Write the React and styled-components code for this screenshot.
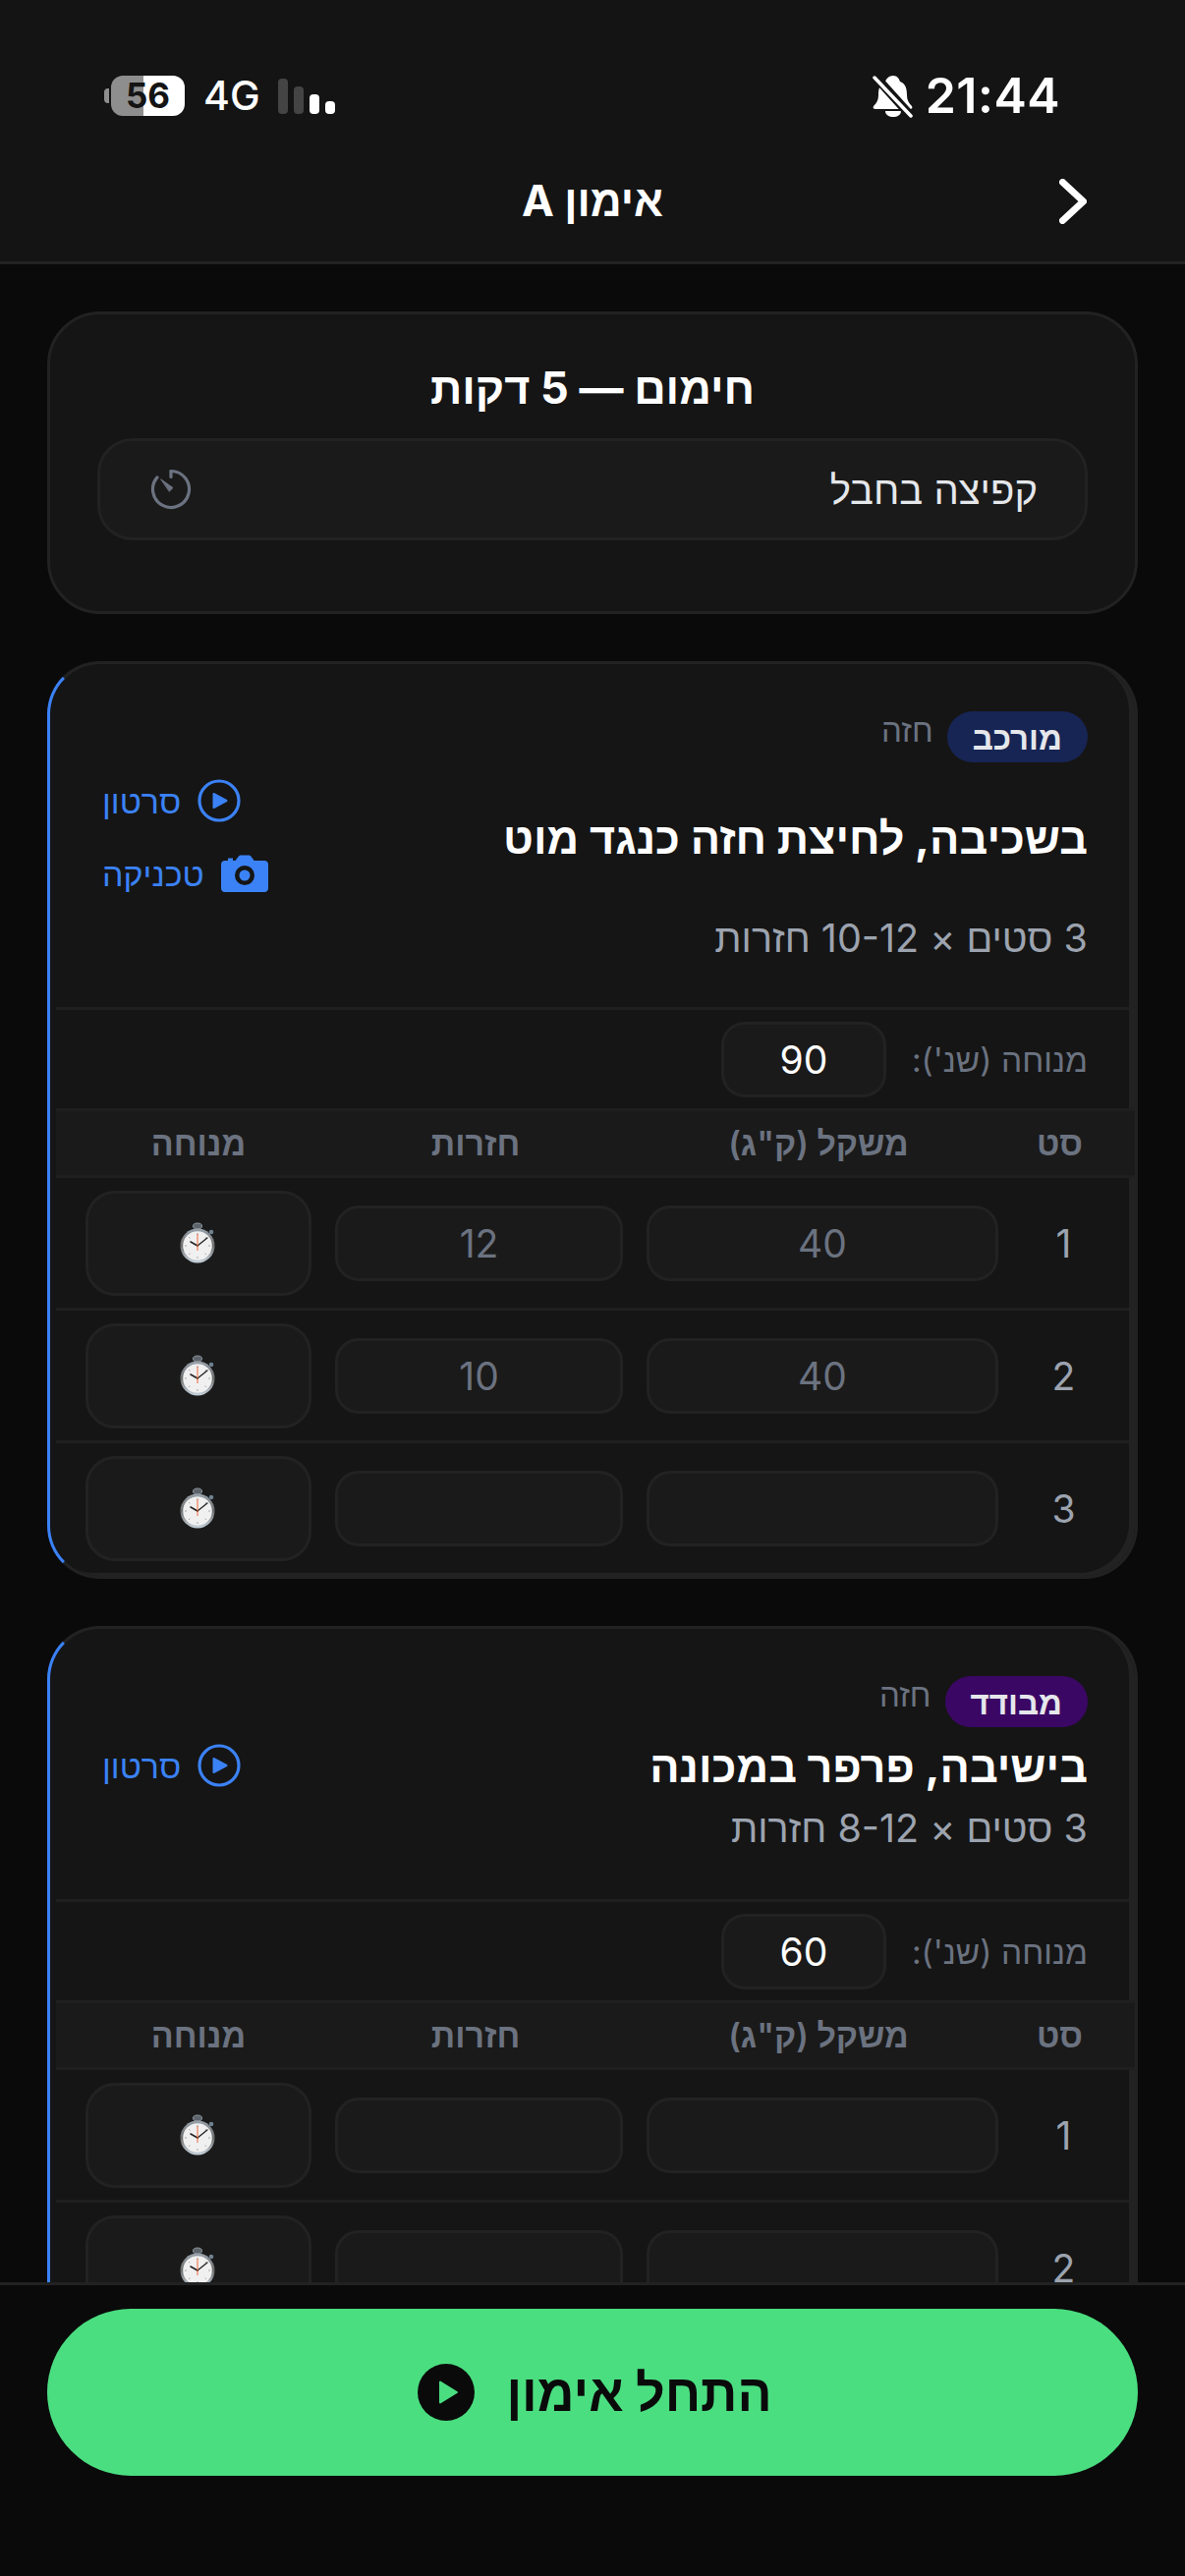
import React from 'react';
import styled, { createGlobalStyle } from 'styled-components';

const GlobalStyle = createGlobalStyle`
  html, body {
    margin: 0;
    padding: 0;
    background: #0a0a0a;
  }
  * {
    box-sizing: border-box;
  }
`;

const Screen = styled.div`
  width: 1206px;
  height: 2622px;
  position: relative;
  overflow: hidden;
  display: flex;
  flex-direction: column;
  background: #0a0a0a;
  font-family: Inter, "Liberation Sans", sans-serif;
  color: #fff;
`;

const Header = styled.header`
  flex: none;
  height: 269px;
  background: #141414;
  border-bottom: 3px solid #222;
`;

const StatusBar = styled.div`
  height: 155px;
  padding: 76px 127px 0 106px;
  display: flex;
  justify-content: space-between;
  align-items: flex-start;
`;

const StatusGroup = styled.div`
  display: flex;
  align-items: center;
  gap: ${(p) => p.$gap}px;
  height: 43px;
`;

const Battery = styled.div`
  position: relative;
  width: 75px;
  height: 41px;
  margin-left: 7px;
  border-radius: 12px;
  background: linear-gradient(90deg, #8e8e8e 0 44%, #fff 44% 100%);
  color: #141414;
  font-size: 35px;
  font-weight: 700;
  line-height: 41px;
  text-align: center;

  &::before {
    content: '';
    position: absolute;
    left: -7px;
    top: 13px;
    width: 5px;
    height: 15px;
    border-radius: 4px 0 0 4px;
    background: #8e8e8e;
  }
`;

const NetworkLabel = styled.span`
  font-size: 41px;
  font-weight: 500;
  line-height: 43px;
  margin-left: 19px;
`;

const Signal = styled.div`
  display: flex;
  align-items: flex-end;
  gap: 6px;
  height: 36px;
  margin-left: 18px;
`;

const SignalBar = styled.i`
  display: block;
  width: 10px;
  height: ${(p) => p.$h}px;
  border-radius: 4px;
  background: ${(p) => (p.$on ? '#fff' : '#444')};
`;

const Clock = styled.span`
  font-size: 50px;
  font-weight: 600;
  line-height: 43px;
  letter-spacing: 0.5px;
`;

const NavBar = styled.div`
  position: relative;
  height: 111px;
  display: flex;
  align-items: center;
  justify-content: center;
  padding-bottom: 14px;
`;

const NavTitle = styled.h1`
  margin: 0;
  font-size: 44px;
  font-weight: 700;
  direction: rtl;
`;

const BackButton = styled.span`
  position: absolute;
  left: 1078px;
  top: 27px;
  display: flex;
`;

const Main = styled.main`
  flex: 1;
  min-height: 0;
  overflow: hidden;
  padding: 48px 48px 0;
  display: flex;
  flex-direction: column;
  gap: 48px;
  direction: rtl;
`;

const WarmupCard = styled.section`
  flex: none;
  height: 308px;
  padding: 45px 48px 0;
  background: #151515;
  border: 3px solid #222;
  border-radius: 54px;
`;

const WarmupTitle = styled.h2`
  margin: 0 0 21px;
  font-size: 45px;
  line-height: 60px;
  font-weight: 700;
  text-align: center;
`;

const WarmupRow = styled.div`
  height: 104px;
  padding: 0 48px 0 51px;
  display: flex;
  justify-content: space-between;
  align-items: center;
  background: #1a1a1a;
  border: 3px solid #222;
  border-radius: 36px;
  font-size: 40px;
  color: #e5e7eb;
`;

const ExerciseCard = styled.section`
  flex: none;
  padding-bottom: 3px;
  background: #151515;
  border: 3px solid #222;
  border-left-color: #3b82f6;
  border-radius: 54px;
  box-shadow: inset -6px -3px 0 #222;
  overflow: hidden;
`;

const ExerciseHead = styled.div`
  height: ${(p) => p.$h}px;
  padding: 48px 48px 0 53px;
  display: flex;
  justify-content: space-between;
`;

const ExerciseInfo = styled.div`
  display: flex;
  flex-direction: column;
`;

const TagLine = styled.div`
  display: flex;
  align-items: flex-start;
  gap: 14px;
  height: 52px;
`;

const Badge = styled.span`
  height: 52px;
  padding: 0 26px;
  border-radius: 26px;
  background: ${(p) => p.$bg};
  color: #e5e7eb;
  font-size: 33px;
  font-weight: 600;
  line-height: 54px;
`;

const Muscle = styled.span`
  font-size: 33px;
  line-height: 38px;
  color: #6b7280;
`;

const ExerciseName = styled.h3`
  margin: ${(p) => p.$top}px 0 0;
  font-size: 45px;
  line-height: 60px;
  font-weight: 700;
`;

const ExerciseScheme = styled.p`
  margin: ${(p) => p.$top}px 0 0;
  font-size: 39.5px;
  line-height: 54px;
  color: #9ca3af;
`;

const Links = styled.div`
  display: flex;
  flex-direction: column;
  align-items: flex-end;
  gap: 30px;
  padding-top: ${(p) => p.$top}px;
`;

const LinkItem = styled.a`
  display: flex;
  align-items: center;
  gap: 17px;
  height: 44px;
  font-size: 34px;
  color: #3b82f6;
`;

const RestRow = styled.div`
  height: 103px;
  margin: 0 6px;
  padding: 12px 42px 0 0;
  display: flex;
  align-items: flex-start;
  gap: 26px;
  border-top: 3px solid #1f1f1f;
`;

const RestLabel = styled.label`
  font-size: 33.5px;
  line-height: 78px;
  color: #6b7280;
`;

const RestInput = styled.div`
  width: 168px;
  height: 77px;
  background: #1a1a1a;
  border: 3px solid #222;
  border-radius: 24px;
  font-size: 39px;
  line-height: 71px;
  text-align: center;
  color: #fff;
`;

const columns = '109px 358px 293px 230px';

const TableHead = styled.div`
  height: 71px;
  margin-left: 6px;
  padding: 0 6px 0 30px;
  display: grid;
  grid-template-columns: ${columns};
  column-gap: 24px;
  align-items: center;
  background: #1a1a1a;
  border-top: 3px solid #1f1f1f;
  border-bottom: 3px solid #1f1f1f;
`;

const HeadCell = styled.span`
  padding-right: ${(p) => p.$nudge || 0}px;
  font-size: 34px;
  font-weight: 600;
  text-align: center;
  color: #6b7280;
`;

const SetHead = styled(HeadCell)`
  margin-left: -24px;
`;

const Row = styled.div`
  height: ${(p) => (p.$last ? 132 : 135)}px;
  margin: 0 6px;
  padding-left: 30px;
  display: grid;
  grid-template-columns: ${columns};
  column-gap: 24px;
  align-items: center;
  border-bottom: ${(p) => (p.$last ? 'none' : '3px solid #1f1f1f')};
`;

const SetNumber = styled.span`
  margin-left: -24px;
  font-size: 39px;
  text-align: center;
  color: #9ca3af;
`;

const ValueBox = styled.div`
  height: 77px;
  background: #1a1a1a;
  border: 3px solid #222;
  border-radius: 24px;
  font-size: 39px;
  line-height: 71px;
  text-align: center;
  color: #6b7280;
`;

const TimerButton = styled.div`
  height: 107px;
  display: flex;
  align-items: center;
  justify-content: center;
  background: #1a1a1a;
  border: 3px solid #222;
  border-radius: 30px;
`;

const Footer = styled.footer`
  position: absolute;
  left: 0;
  right: 0;
  bottom: 0;
  height: 299px;
  padding: 24px 48px 0;
  background: #0a0a0a;
  border-top: 3px solid #222;
`;

const StartButton = styled.button`
  width: 100%;
  height: 170px;
  padding: 0 0 0 5px;
  display: flex;
  align-items: center;
  justify-content: center;
  gap: 32px;
  border: none;
  border-radius: 85px;
  background: #4ade80;
  color: #0a0a0a;
  font-family: inherit;
  font-size: 52px;
  font-weight: 700;
  direction: rtl;
`;

const BellOff = () => (
  <svg width="42" height="44" viewBox="0 0 42 44">
    <path d="M21 1c4 0 6 3 7 6 6 2 7 8 7 14 0 5 2 8 5 11 1 2 0 3-2 3H3c-2 0-3-1-2-3 3-3 5-6 5-11 0-6 1-12 7-14 1-3 4-6 8-6z" fill="#fff" />
    <path d="M13 37h16c0 4-4 6-8 6s-8-2-8-6z" fill="#fff" />
    <path d="M3 2l36 40" stroke="#141414" strokeWidth="9" />
    <path d="M2 3l37 39" stroke="#fff" strokeWidth="3.5" strokeLinecap="round" />
  </svg>
);

const Chevron = () => (
  <svg width="28" height="46" viewBox="0 0 28 46" fill="none">
    <path d="M3.500 3.500L24.500 23L3.500 42.500" stroke="#fff" strokeWidth="7" strokeLinecap="round" strokeLinejoin="round" />
  </svg>
);

const WarmupTimer = () => (
  <svg width="42" height="42" viewBox="0 0 42 42" fill="none" stroke="#6b7280" strokeWidth="3.2" strokeLinecap="round">
    <path d="M21 2.500a18.500 18.500 0 1 1-14 6.400" />
    <path d="M21 2.500v6" />
    <path d="M11 11l12 8.500-3.500 3.500z" fill="#6b7280" strokeWidth="1" strokeLinejoin="round" />
  </svg>
);

const PlayCircle = () => (
  <svg width="44" height="44" viewBox="0 0 44 44">
    <circle cx="22" cy="22" r="20" fill="none" stroke="#3b82f6" strokeWidth="3.2" />
    <path d="M16.500 15v14l13-7z" fill="#3b82f6" stroke="#3b82f6" strokeWidth="2" strokeLinejoin="round" />
  </svg>
);

const Camera = () => (
  <svg width="48" height="38" viewBox="0 0 48 38">
    <path
      fillRule="evenodd"
      fill="#3b82f6"
      d="M5 6h2V3.500h5V6h2.500l3-4c.6-1 1.400-1.600 2.600-1.600h8c1.200 0 2 .6 2.600 1.600l3 4H44c2.400 0 4 1.600 4 4v24c0 2.400-1.600 4-4 4H4c-2.400 0-4-1.600-4-4V10c0-2.400 1.600-4 4-4zM24 11a10 10 0 1 0 0 20 10 10 0 0 0 0-20zM24 15.500a5.500 5.500 0 1 1 0 11 5.500 5.500 0 0 1 0-11z"
    />
  </svg>
);

// the stopwatch emoji from the rest column
const Stopwatch = ({ id }) => (
  <svg width="38" height="42" viewBox="0 0 38 42">
    <defs>
      <linearGradient id={`rim-${id}`} x1="0" y1="0" x2="0" y2="1">
        <stop offset="0" stopColor="#9aa3ad" />
        <stop offset="0.5" stopColor="#6d6d6d" />
        <stop offset="1" stopColor="#c9d4de" />
      </linearGradient>
    </defs>
    <ellipse cx="18" cy="4" rx="4.500" ry="3" fill="#5d646b" stroke="#8c949b" strokeWidth="1" />
    <rect x="16.500" y="6" width="3" height="4" fill="#777" />
    <circle cx="32" cy="10" r="2.300" fill="#6f8190" />
    <circle cx="18" cy="24" r="17.500" fill={`url(#rim-${id})`} />
    <circle cx="18" cy="24" r="14.800" fill="#f0f0f0" />
    <g stroke="#a8a8a8" strokeWidth="1">
      <path d="M18 11v2M18 35v2M5 24h2M29 24h2M9 15l1.400 1.400M27 15l-1.400 1.400M9 33l1.400-1.400M27 33l-1.400-1.400" />
    </g>
    <path d="M18 24L28 16" stroke="#222" strokeWidth="1.300" strokeLinecap="round" />
    <path d="M18 24L11 20" stroke="#222" strokeWidth="1.600" strokeLinecap="round" />
    <path d="M18 12v17" stroke="#f0663a" strokeWidth="1" />
  </svg>
);

const StartIcon = () => (
  <svg width="58" height="58" viewBox="0 0 58 58">
    <circle cx="29" cy="29" r="29" fill="#0a0a0a" />
    <path d="M23 18.500v21l17-10.500z" fill="#4ade80" stroke="#4ade80" strokeWidth="2" strokeLinejoin="round" />
  </svg>
);

const SetRow = ({ id, num, weight, reps, last }) => (
  <Row $last={last}>
    <SetNumber>{num}</SetNumber>
    <ValueBox>{weight}</ValueBox>
    <ValueBox>{reps}</ValueBox>
    <TimerButton>
      <Stopwatch id={id} />
    </TimerButton>
  </Row>
);

const SetTable = ({ id, sets }) => (
  <div>
    <TableHead>
      <SetHead $nudge={8}>סט</SetHead>
      <HeadCell $nudge={8}>משקל (ק"ג)</HeadCell>
      <HeadCell $nudge={7}>חזרות</HeadCell>
      <HeadCell>מנוחה</HeadCell>
    </TableHead>
    {sets.map((s, i) => (
      <SetRow key={i} id={`${id}-${i}`} num={i + 1} weight={s[0]} reps={s[1]} last={i === sets.length - 1} />
    ))}
  </div>
);

export default function App() {
  return (
    <Screen>
      <GlobalStyle />
      <Header>
        <StatusBar>
          <StatusGroup $gap={0}>
            <Battery>56</Battery>
            <NetworkLabel>4G</NetworkLabel>
            <Signal>
              <SignalBar $h={36} />
              <SignalBar $h={28} />
              <SignalBar $h={20} $on />
              <SignalBar $h={13} $on />
            </Signal>
          </StatusGroup>
          <StatusGroup $gap={12}>
            <BellOff />
            <Clock>21:44</Clock>
          </StatusGroup>
        </StatusBar>
        <NavBar>
          <NavTitle>אימון A</NavTitle>
          <BackButton>
            <Chevron />
          </BackButton>
        </NavBar>
      </Header>
      <Main>
        <WarmupCard>
          <WarmupTitle>חימום — 5 דקות</WarmupTitle>
          <WarmupRow>
            <span>קפיצה בחבל</span>
            <WarmupTimer />
          </WarmupRow>
        </WarmupCard>

        <ExerciseCard>
          <ExerciseHead $h={349}>
            <ExerciseInfo>
              <TagLine>
                <Badge $bg="#172554">מורכב</Badge>
                <Muscle>חזה</Muscle>
              </TagLine>
              <ExerciseName $top={47}>בשכיבה, לחיצת חזה כנגד מוט</ExerciseName>
              <ExerciseScheme $top={45}>3 סטים × 10-12 חזרות</ExerciseScheme>
            </ExerciseInfo>
            <Links $top={69}>
              <LinkItem>
                <PlayCircle />
                <span>סרטון</span>
              </LinkItem>
              <LinkItem>
                <Camera />
                <span>טכניקה</span>
              </LinkItem>
            </Links>
          </ExerciseHead>
          <RestRow>
            <RestLabel>מנוחה (שנ'):</RestLabel>
            <RestInput>90</RestInput>
          </RestRow>
          <SetTable
            id="a"
            sets={[
              ['40', '12'],
              ['40', '10'],
              ['', ''],
            ]}
          />
        </ExerciseCard>

        <ExerciseCard>
          <ExerciseHead $h={275}>
            <ExerciseInfo>
              <TagLine>
                <Badge $bg="#3b0764">מבודד</Badge>
                <Muscle>חזה</Muscle>
              </TagLine>
              <ExerciseName $top={10}>בישיבה, פרפר במכונה</ExerciseName>
              <ExerciseScheme $top={6}>3 סטים × 8-12 חזרות</ExerciseScheme>
            </ExerciseInfo>
            <Links $top={69}>
              <LinkItem>
                <PlayCircle />
                <span>סרטון</span>
              </LinkItem>
            </Links>
          </ExerciseHead>
          <RestRow>
            <RestLabel>מנוחה (שנ'):</RestLabel>
            <RestInput>60</RestInput>
          </RestRow>
          <SetTable
            id="b"
            sets={[
              ['', ''],
              ['', ''],
              ['', ''],
            ]}
          />
        </ExerciseCard>
      </Main>
      <Footer>
        <StartButton>
          <span>התחל אימון</span>
          <StartIcon />
        </StartButton>
      </Footer>
    </Screen>
  );
}
